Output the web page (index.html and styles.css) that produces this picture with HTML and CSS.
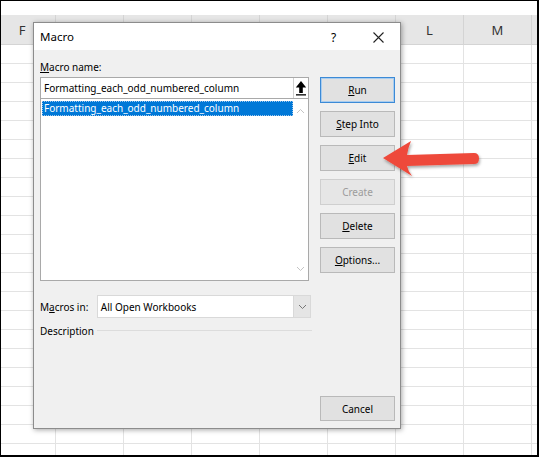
FILE: index.html
```html
<!DOCTYPE html>
<html>
<head>
<meta charset="utf-8">
<link rel="stylesheet" href="styles.css">
</head>
<body>
<div class="frame">
  <div class="topgap"></div>
  <div class="colhead">
    <div class="ch first">F</div>
    <div class="ch">G</div>
    <div class="ch">H</div>
    <div class="ch">I</div>
    <div class="ch">J</div>
    <div class="ch">K</div>
    <div class="ch">L</div>
    <div class="ch">M</div>
  </div>
  <div class="cells"></div>

  <div class="dialog">
    <div class="titlebar">
      <span class="title">Macro</span>
      <span class="help">?</span>
      <svg class="close" width="11" height="11" viewBox="0 0 11 11"><path d="M0.5 0.5 L10.5 10.5 M10.5 0.5 L0.5 10.5" stroke="#222" stroke-width="1.1" fill="none"/></svg>
    </div>
    <div class="dbody">
      <div class="leftcol">
        <div class="label"><u>M</u>acro name:</div>
        <div class="namebox">
          <span class="nametext">Formatting_each_odd_numbered_column</span>
          <span class="upbtn"><svg width="12" height="16" viewBox="0 0 12 16"><path d="M6 1 L0.8 7.5 L4.2 7.5 L4.2 13 L7.8 13 L7.8 7.5 L11.2 7.5 Z" fill="#000"/><rect x="1" y="14.2" width="10" height="1.3" fill="#000"/></svg></span>
        </div>
        <div class="listbox">
          <div class="items">
            <div class="item sel">Formatting_each_odd_numbered_column</div>
          </div>
          <div class="scroll">
            <svg width="9" height="6" viewBox="0 0 9 6"><path d="M1 5 L4.5 1.5 L8 5" stroke="#c4c4c4" fill="none"/></svg>
            <svg width="9" height="6" viewBox="0 0 9 6"><path d="M1 1 L4.5 4.5 L8 1" stroke="#c4c4c4" fill="none"/></svg>
          </div>
        </div>
        <div class="inrow">
          <span class="inlabel">M<u>a</u>cros in:</span>
          <div class="combo">
            <span class="combotext">All Open Workbooks</span>
            <span class="dd"><svg width="9" height="6" viewBox="0 0 9 6"><path d="M1 1 L4.5 4.5 L8 1" stroke="#777" fill="none"/></svg></span>
          </div>
        </div>
        <div class="descrow">
          <span>Description</span>
          <span class="rule"></span>
        </div>
      </div>
      <div class="btncol">
        <div class="btn default"><u>R</u>un</div>
        <div class="btn"><u>S</u>tep Into</div>
        <div class="btn"><u>E</u>dit</div>
        <div class="btn disabled">Create</div>
        <div class="btn"><u>D</u>elete</div>
        <div class="btn"><u>O</u>ptions...</div>
        <div class="btn cancel">Cancel</div>
      </div>
    </div>
  </div>

  <svg class="arrow" width="110" height="50" viewBox="375 135 110 50">
    <defs>
      <filter id="sh" x="-20%" y="-40%" width="140%" height="180%">
        <feDropShadow dx="1" dy="2" stdDeviation="1.5" flood-color="#000" flood-opacity="0.35"/>
      </filter>
    </defs>
    <path filter="url(#sh)" d="M383 158 L411 141 Q408 148 407 155 L474 153 Q479 153 479 158.5 Q479 164 474 164 L407 166 Q408 171 412 176 Z" fill="#ee4a3b"/>
  </svg>
</div>
</body>
</html>
```
FILE: styles.css
```css
* { box-sizing: border-box; }
html, body { margin: 0; padding: 0; background: #fff; }
body { font-family: "Noto Sans", "Open Sans", sans-serif; }

.frame {
  position: relative;
  width: 539px;
  height: 457px;
  border-style: solid;
  border-color: #000;
  border-width: 1px 2px 2px 1px;
  background: #fff;
  overflow: hidden;
  display: flex;
  flex-direction: column;
}

.topgap { height: 14px; flex: none; background: #fff; }

.colhead {
  flex: none;
  height: 30px;
  display: flex;
  background: #e6e6e6;
  border-bottom: 1px solid #d4d4d4;
}
.ch {
  flex: none;
  width: 68px;
  height: 100%;
  border-right: 1px solid #d4d4d4;
  font-size: 13px;
  color: #333;
  display: flex;
  align-items: center;
  justify-content: center;
  padding-top: 1px;
}
.ch.first { width: 55px; padding-right: 12px; }

.cells {
  flex: 1;
  background-image:
    linear-gradient(to right, #e3e3e3 0 1px, transparent 1px),
    linear-gradient(to bottom, transparent 0 18px, #e3e3e3 18px 19px);
  background-size: 68px 100%, 100% 19px;
  background-position: 54px 0, 0 0;
}

.dialog {
  position: absolute;
  left: 32px;
  top: 21px;
  width: 368px;
  height: 407px;
  border: 1px solid #8c8c8c;
  background: #f0f0f0;
  box-shadow: 1px 1px 5px rgba(0,0,0,0.35);
  display: flex;
  flex-direction: column;
  font-size: 10px;
  color: #000;
}

.titlebar {
  flex: none;
  height: 27px;
  background: #fff;
  display: flex;
  align-items: center;
  padding-left: 6px;
  position: relative;
}
.title { font-size: 11.5px; }
.help { position: absolute; left: 297px; top: 6px; font-size: 12px; }
.close { position: absolute; left: 339px; top: 9px; }

.dbody {
  flex: 1;
  display: flex;
  padding: 9px 5px 7px 6px;
}

.leftcol { width: 271px; display: flex; flex-direction: column; }
.label { height: 18px; line-height: 16px; }

.namebox {
  width: 269px;
  height: 22px;
  border: 1px solid #a9a9a9;
  background: #fff;
  display: flex;
  align-items: center;
  justify-content: space-between;
  padding-left: 3px;
}
.nametext { white-space: nowrap; }
.upbtn {
  width: 15px;
  height: 20px;
  border-left: 1px solid #d0d0d0;
  background: #fff;
  display: flex;
  align-items: center;
  justify-content: center;
}

.listbox {
  width: 269px;
  height: 182px;
  border: 1px solid #a9a9a9;
  border-top: none;
  background: #fff;
  display: flex;
}
.items { flex: 1; padding: 2px 0 0 1px; }
.item { height: 15px; line-height: 15px; padding-left: 2px; white-space: nowrap; }
.item.sel { background: #0078d7; color: #fff; outline: 1px dotted #9ec7ee; outline-offset: -1px; }
.scroll {
  width: 15px;
  background: #fff;
  display: flex;
  flex-direction: column;
  align-items: center;
  justify-content: space-between;
  padding: 9px 0 8px;
}

.inrow { margin-top: 14px; display: flex; align-items: center; height: 23px; }
.inlabel { width: 57px; white-space: nowrap; }
.combo {
  width: 215px;
  height: 23px;
  background: #fff;
  border: 1px solid #d9d9d9;
  display: flex;
  align-items: center;
  justify-content: space-between;
  padding-left: 3px;
}
.dd {
  width: 17px;
  height: 21px;
  background: #e5e5e5;
  border-left: 1px solid #d9d9d9;
  display: flex;
  align-items: center;
  justify-content: center;
}

.descrow { margin-top: 3px; display: flex; align-items: center; height: 20px; width: 272px; }
.rule { flex: 1; height: 1px; background: #dcdcdc; margin-left: 3px; margin-top: -2px; }

.btncol {
  margin-left: 9px;
  width: 75px;
  display: flex;
  flex-direction: column;
  gap: 8px;
  padding-top: 18px;
}
.btn {
  height: 26px;
  border: 1px solid #b9b9b9;
  background: #e1e1e1;
  display: flex;
  align-items: center;
  justify-content: center;
  white-space: nowrap;
}
.btn.default { border: 1px solid #3c8ad6; box-shadow: inset 0 0 0 1px #a9cdef; }
.btn.disabled { color: #9c9c9c; border-color: #cfcfcf; background: #e6e6e6; }
.btn.cancel { margin-top: auto; height: 25px; }

.arrow { position: absolute; left: 374px; top: 134px; }
```
